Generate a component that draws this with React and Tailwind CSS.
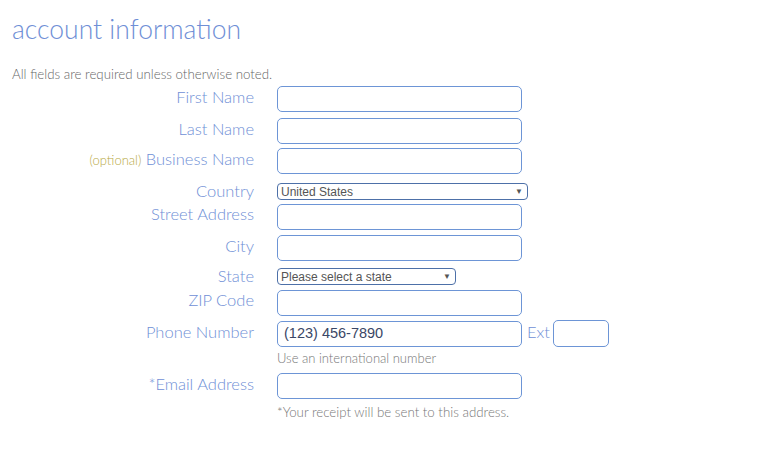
import React from "react";

const font = { fontFamily: "Lato, 'Open Sans', sans-serif" };

function Label({ children, className = "" }) {
  return (
    <div className={`w-[254px] shrink-0 text-right text-[16.5px] font-light leading-5 text-[#6f8fd6] ${className}`}>
      {children}
    </div>
  );
}

function TextInput({ className = "", children }) {
  return (
    <div className={`ml-[23px] h-[26px] w-[245px] rounded-[5px] border border-[#6d95d6] bg-white ${className}`}>
      {children}
    </div>
  );
}

function SelectBox({ value, width }) {
  return (
    <div
      className={`ml-[23px] flex h-[17px] items-center justify-between rounded-[4px] border border-[#4d70a8] bg-white pl-[3px] pr-[4px] ${width}`}
      style={{ fontFamily: "'Liberation Sans', Arial, sans-serif" }}
    >
      <span className="text-[12px] leading-none text-[#555]">{value}</span>
      <span className="text-[8px] leading-none text-[#555]">▼</span>
    </div>
  );
}

export default function App() {
  return (
    <div className="h-[452px] w-[768px] bg-white" style={font}>
      <div className="pl-[12px] pt-[13px]">
        <h1 className="text-[26.5px] font-light leading-8 text-[#6f8fd6]">account information</h1>
        <p className="mt-[21px] text-[13.3px] font-light leading-4 text-[#666]">
          All fields are required unless otherwise noted.
        </p>
      </div>

      <div className="mt-[4px] flex flex-col">
        <div className="flex items-start">
          <Label className="pt-[1px]">First Name</Label>
          <TextInput />
        </div>

        <div className="mt-[6px] flex items-start">
          <Label className="pt-[1px]">Last Name</Label>
          <TextInput />
        </div>

        <div className="mt-[4px] flex items-start">
          <Label className="pt-[1px]">
            <span className="text-[13px] text-[#b8a945]">(optional)</span> Business Name
          </Label>
          <TextInput />
        </div>

        <div className="mt-[9px] flex items-start">
          <Label className="mt-[-2px]">Country</Label>
          <SelectBox value="United States" width="w-[251px]" />
        </div>

        <div className="mt-[3px] flex items-start">
          <Label className="pt-[0px]">Street Address</Label>
          <TextInput />
        </div>

        <div className="mt-[5px] flex items-start">
          <Label className="pt-[1px]">City</Label>
          <TextInput />
        </div>

        <div className="mt-[7px] flex items-start">
          <Label className="mt-[-2px]">State</Label>
          <SelectBox value="Please select a state" width="w-[179px]" />
        </div>

        <div className="mt-[4px] flex items-start">
          <Label className="pt-[0px]">ZIP Code</Label>
          <TextInput />
        </div>

        <div className="mt-[5px] flex items-start">
          <Label className="pt-[1px]">Phone Number</Label>
          <TextInput className="flex items-center px-[6px]">
            <span
              className="text-[14.5px] text-[#3a4766]"
              style={{ fontFamily: "'Liberation Sans', Arial, sans-serif" }}
            >
              (123) 456-7890
            </span>
          </TextInput>
          <span className="ml-[5px] pt-[1px] text-[16.5px] font-light leading-5 text-[#6f8fd6]">Ext</span>
          <div className="ml-[3px] mt-[-1px] h-[27px] w-[56px] rounded-[5px] border border-[#6d95d6] bg-white" />
        </div>

        <div className="ml-[277px] mt-[1px] text-[13px] font-light leading-5 text-[#777]">
          Use an international number
        </div>

        <div className="mt-[5px] flex items-start">
          <Label className="pt-[1px]">*Email Address</Label>
          <TextInput />
        </div>

        <div className="ml-[277px] mt-[5px] text-[13.3px] font-light leading-4 text-[#777]">
          *Your receipt will be sent to this address.
        </div>
      </div>
    </div>
  );
}
